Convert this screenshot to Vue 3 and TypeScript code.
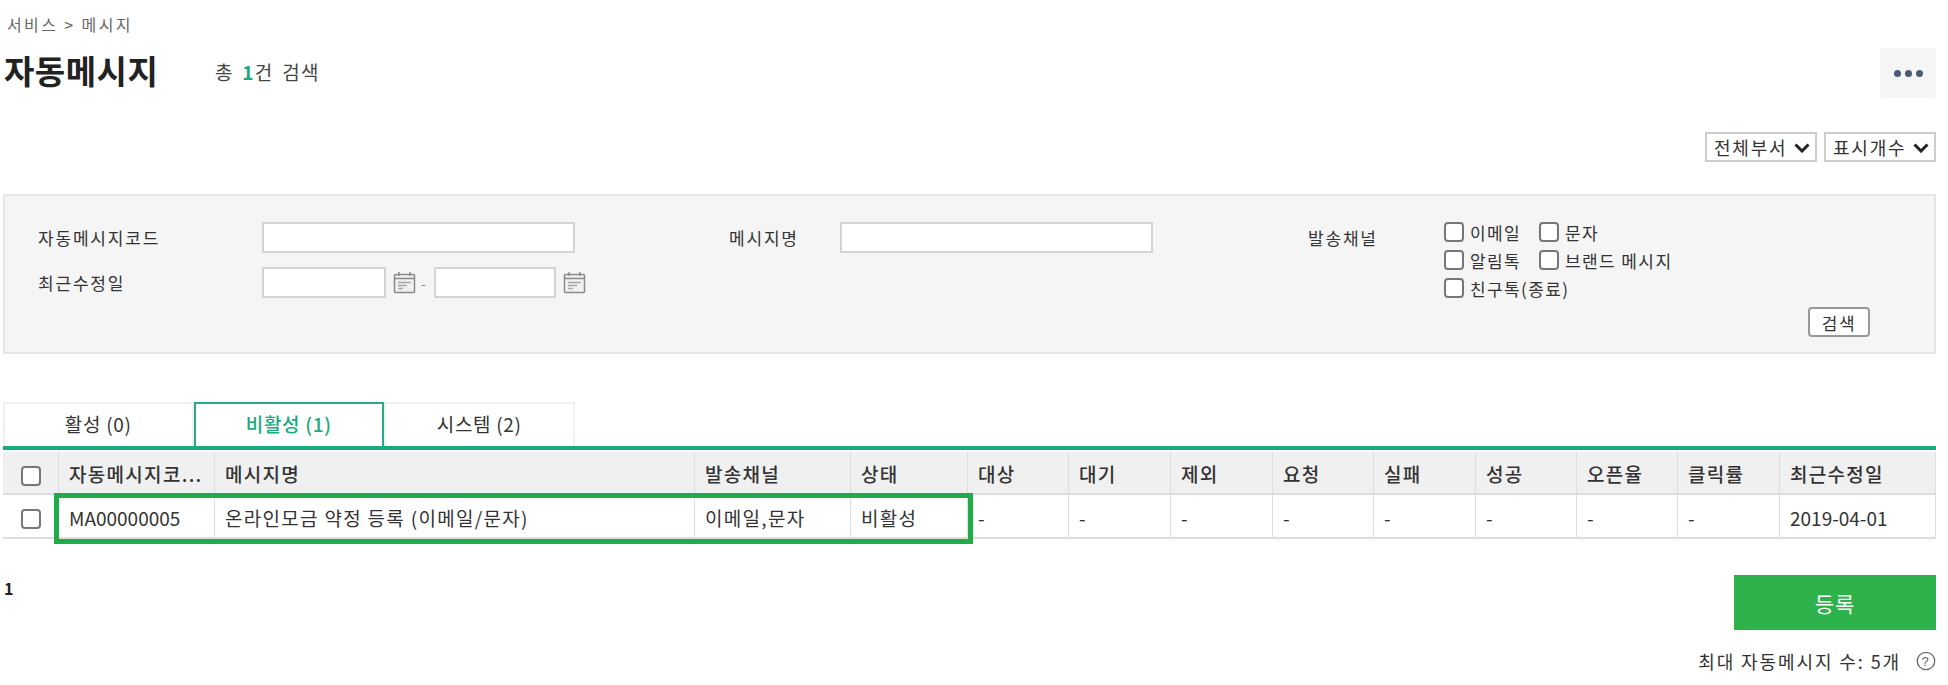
<script setup lang="ts">
interface Col { label: string; width: number; value: string; latin?: boolean }
const cols: Col[] = [
  { label: '자동메시지코...', width: 156, value: 'MA00000005', latin: true },
  { label: '메시지명', width: 480, value: '온라인모금 약정 등록 (이메일/문자)' },
  { label: '발송채널', width: 156, value: '이메일,문자' },
  { label: '상태', width: 117, value: '비활성' },
  { label: '대상', width: 101, value: '-' },
  { label: '대기', width: 102, value: '-' },
  { label: '제외', width: 102, value: '-' },
  { label: '요청', width: 101, value: '-' },
  { label: '실패', width: 102, value: '-' },
  { label: '성공', width: 101, value: '-' },
  { label: '오픈율', width: 101, value: '-' },
  { label: '클릭률', width: 102, value: '-' },
  { label: '최근수정일', width: 156, value: '2019-04-01', latin: true },
]
const tabs = [
  { label: '활성 (0)', active: false },
  { label: '비활성 (1)', active: true },
  { label: '시스템 (2)', active: false },
]
const channels = [
  { label: '이메일', wide: false },
  { label: '문자', wide: true },
  { label: '알림톡', wide: false },
  { label: '브랜드 메시지', wide: true },
  { label: '친구톡(종료)', wide: false },
]
const selects = ['전체부서', '표시개수']
</script>

<template>
  <div class="page">
    <div class="crumb">서비스 &gt; 메시지</div>
    <div class="head">
      <h1 class="title">자동메시지</h1>
      <p class="count">총 <b>1</b>건 검색</p>
      <button class="more" type="button" aria-label="더보기"><i></i><i></i><i></i></button>
    </div>
    <div class="filters">
      <div v-for="s in selects" :key="s" class="sel-wrap">
        <select class="sel"><option>{{ s }}</option></select>
        <svg class="chev" viewBox="0 0 16 10" fill="none" stroke="#222" stroke-width="3">
          <path d="M1.5 1.5L8 8l6.5-6.5" />
        </svg>
      </div>
    </div>

    <section class="panel">
      <div class="col col-a">
        <div class="field">
          <label class="lbl">자동메시지코드</label>
          <input class="inp inp-long" type="text" />
        </div>
        <div class="field">
          <label class="lbl">최근수정일</label>
          <input class="inp inp-d1" type="text" />
          <svg class="cal" viewBox="0 0 23 23" fill="none" stroke="#8a8a8a" stroke-width="1.5">
            <rect x="1.5" y="3.5" width="20" height="18" rx="1" fill="#f1f1f1" />
            <path d="M1.5 7.5h20M6 1v4M17 1v4" />
            <path d="M5 11.5h13M5 14.5h9M5 17.5h5" stroke="#a8a8a8" />
          </svg>
          <span class="dash">-</span>
          <input class="inp inp-d2" type="text" />
          <svg class="cal" viewBox="0 0 23 23" fill="none" stroke="#8a8a8a" stroke-width="1.5">
            <rect x="1.5" y="3.5" width="20" height="18" rx="1" fill="#f1f1f1" />
            <path d="M1.5 7.5h20M6 1v4M17 1v4" />
            <path d="M5 11.5h13M5 14.5h9M5 17.5h5" stroke="#a8a8a8" />
          </svg>
        </div>
      </div>
      <div class="col col-b">
        <div class="field">
          <label class="lbl lbl-b">메시지명</label>
          <input class="inp inp-long" type="text" />
        </div>
      </div>
      <div class="col col-c">
        <label class="lbl lbl-c">발송채널</label>
        <div class="checks">
          <label v-for="c in channels" :key="c.label" class="chk" :class="{ wide: c.wide }">
            <input type="checkbox" class="box" />
            <span>{{ c.label }}</span>
          </label>
        </div>
      </div>
      <button class="search" type="button">검색</button>
    </section>

    <nav class="tabs">
      <a v-for="t in tabs" :key="t.label" class="tab" :class="{ on: t.active }">{{ t.label }}</a>
    </nav>

    <div class="tbl-wrap">
      <table class="tbl">
        <colgroup>
          <col style="width: 56px" />
          <col v-for="c in cols" :key="c.label" :style="{ width: c.width + 'px' }" />
        </colgroup>
        <thead>
          <tr>
            <th class="cb"><input type="checkbox" class="box" /></th>
            <th v-for="c in cols" :key="c.label">{{ c.label }}</th>
          </tr>
        </thead>
        <tbody>
          <tr>
            <td class="cb"><input type="checkbox" class="box" /></td>
            <td v-for="c in cols" :key="c.label" :class="{ latin: c.latin }">{{ c.value }}</td>
          </tr>
        </tbody>
      </table>
      <div class="mark"></div>
    </div>

    <div class="foot">
      <div class="pager">1</div>
      <div class="actions">
        <button class="add" type="button">등록</button>
        <div class="limit">
          <span>최대 자동메시지 수: 5개</span>
          <svg class="help" viewBox="0 0 20 20" fill="none">
            <circle cx="10" cy="10" r="8.7" stroke="#666" stroke-width="1.3" />
            <text x="10" y="14.6" text-anchor="middle" font-size="13" fill="#666" font-family="Liberation Sans, sans-serif">?</text>
          </svg>
        </div>
      </div>
    </div>
  </div>
</template>

<style>
html, body { margin: 0; background: #fff; }
</style>

<style scoped>
.page {
  width: 1948px;
  height: 685px;
  box-sizing: border-box;
  padding: 0 12px 0 3px;
  overflow: hidden;
  font-family: "Noto Sans CJK KR", "Noto Sans", sans-serif;
  color: #333;
  font-size: 17px;
}
.crumb {
  height: 48px;
  padding: 14px 0 0 4px;
  box-sizing: border-box;
  font-size: 16px;
  line-height: 20px;
  color: #666;
  letter-spacing: 2.4px;
}
.head {
  display: flex;
  align-items: flex-start;
  height: 50px;
}
.title {
  margin: 0;
  width: 212px;
  padding-left: 1px;
  box-sizing: border-box;
  font-size: 33px;
  line-height: 44px;
  font-weight: 700;
  letter-spacing: 0.5px;
  color: #222;
}
.count {
  margin: 0;
  padding-top: 11px;
  font-size: 19px;
  line-height: 26px;
  letter-spacing: 1.3px;
  word-spacing: 3px;
  color: #444;
}
.count b { color: #1aaa7f; font-weight: 700; }
.more {
  margin-left: auto;
  width: 56px;
  height: 50px;
  border: 0;
  border-radius: 4px;
  background: #f5f5f5;
  display: flex;
  align-items: center;
  justify-content: center;
  gap: 4px;
  padding: 0;
}
.more i {
  width: 7px;
  height: 7px;
  border-radius: 50%;
  background: #4c5a78;
}
.filters {
  display: flex;
  justify-content: flex-end;
  gap: 7px;
  margin-top: 34px;
  height: 30px;
}
.sel-wrap {
  position: relative;
  width: 112px;
  height: 30px;
}
.sel {
  appearance: none;
  display: block;
  width: 100%;
  height: 100%;
  box-sizing: border-box;
  border: 2px solid #ccc;
  background: #fff;
  font: inherit;
  font-size: 18px;
  letter-spacing: 1.8px;
  color: #333;
  padding: 0 0 0 7px;
  border-radius: 0;
  outline: none;
}
.chev {
  position: absolute;
  right: 7px;
  top: 11px;
  width: 16px;
  height: 10px;
  pointer-events: none;
}
.panel {
  position: relative;
  display: flex;
  margin-top: 32px;
  height: 160px;
  box-sizing: border-box;
  border: 2px solid #e6e6e6;
  background: #f5f5f5;
  padding: 26px 0 0 33px;
}
.col-a { width: 691px; flex: none; }
.col-b { width: 579px; flex: none; }
.field {
  display: flex;
  align-items: center;
  height: 31px;
  margin-bottom: 14px;
}
.lbl {
  flex: none;
  width: 224px;
  font-size: 17px;
  letter-spacing: 1.8px;
  color: #333;
}
.lbl-b { width: 111px; }
.lbl-c { width: 136px; margin-top: 4px; line-height: 24px; }
.col-c { display: flex; align-items: flex-start; }
.inp {
  box-sizing: border-box;
  height: 31px;
  border: 2px solid #d4d4d4;
  background: #fff;
  padding: 0 6px;
  border-radius: 0;
  outline: none;
}
.inp-long { width: 313px; }
.inp-d1 { width: 124px; }
.inp-d2 { width: 122px; }
.cal { width: 23px; height: 23px; margin-left: 7px; flex: none; }
.dash { width: 18px; padding-left: 5px; box-sizing: border-box; color: #888; font-size: 14px; }
.checks {
  display: flex;
  flex-wrap: wrap;
  width: 300px;
  margin-top: -4px;
}
.chk {
  display: flex;
  align-items: center;
  gap: 6px;
  width: 95px;
  height: 28px;
  font-size: 17px;
  letter-spacing: 1.4px;
  white-space: nowrap;
  color: #333;
}
.chk.wide { width: 205px; }
.box {
  appearance: none;
  margin: 0;
  flex: none;
  width: 20px;
  height: 20px;
  box-sizing: border-box;
  border: 2px solid #777;
  border-radius: 4px;
  background: #fff;
}
.search {
  position: absolute;
  right: 64px;
  bottom: 15px;
  width: 62px;
  height: 30px;
  box-sizing: border-box;
  border: 2px solid #999;
  border-radius: 4px;
  background: #fff;
  font: inherit;
  font-size: 17px;
  letter-spacing: 1.5px;
  color: #333;
  padding: 0;
}
.tabs {
  display: flex;
  margin-top: 48px;
  height: 48px;
  box-sizing: border-box;
  border-bottom: 4px solid #1aaa7f;
}
.tab {
  width: 190.5px;
  box-sizing: border-box;
  border: 2px solid #f0f0f0;
  border-bottom: 0;
  text-align: center;
  line-height: 40px;
  font-size: 19px;
  letter-spacing: 0.7px;
  color: #333;
}
.tab.on {
  border-color: #2aa98a;
  color: #1aaa7f;
  font-weight: 500;
}
.tbl-wrap {
  position: relative;
  margin-top: 2px;
}
.tbl {
  width: 1933px;
  table-layout: fixed;
  border-collapse: separate;
  border-spacing: 0;
  font-size: 19px;
}
.tbl th, .tbl td {
  box-sizing: border-box;
  padding: 2px 10px 0;
  text-align: left;
  white-space: nowrap;
  overflow: hidden;
  border-right: 1px solid #ddd;
  border-bottom: 2px solid #ddd;
  color: #333;
  letter-spacing: 1.3px;
}
.tbl th {
  height: 43px;
  background: #f0f0f0;
  font-weight: 500;
}
.tbl td {
  height: 44px;
  background: #fff;
}
.tbl td.latin { letter-spacing: 0; }
.tbl .cb { text-align: center; padding: 0; }
.tbl .cb .box { vertical-align: middle; }
.mark {
  position: absolute;
  left: 51px;
  top: 41px;
  width: 919px;
  height: 51px;
  box-sizing: border-box;
  border: 5px solid #1fab47;
  pointer-events: none;
}
.foot {
  display: flex;
  justify-content: space-between;
  margin-top: 36px;
}
.pager {
  padding-left: 1px;
  font-size: 16px;
  line-height: 26px;
  font-weight: 700;
  color: #222;
}
.actions {
  display: flex;
  flex-direction: column;
  align-items: flex-end;
}
.add {
  width: 202px;
  height: 55px;
  border: 0;
  background: #2db14b;
  color: #fff;
  font: inherit;
  font-size: 21px;
  letter-spacing: 1px;
  padding: 0;
}
.limit {
  display: flex;
  align-items: center;
  gap: 15px;
  margin-top: 20px;
  font-size: 18px;
  letter-spacing: 1.9px;
  line-height: 22px;
  color: #333;
}
.help { width: 20px; height: 20px; }
</style>
